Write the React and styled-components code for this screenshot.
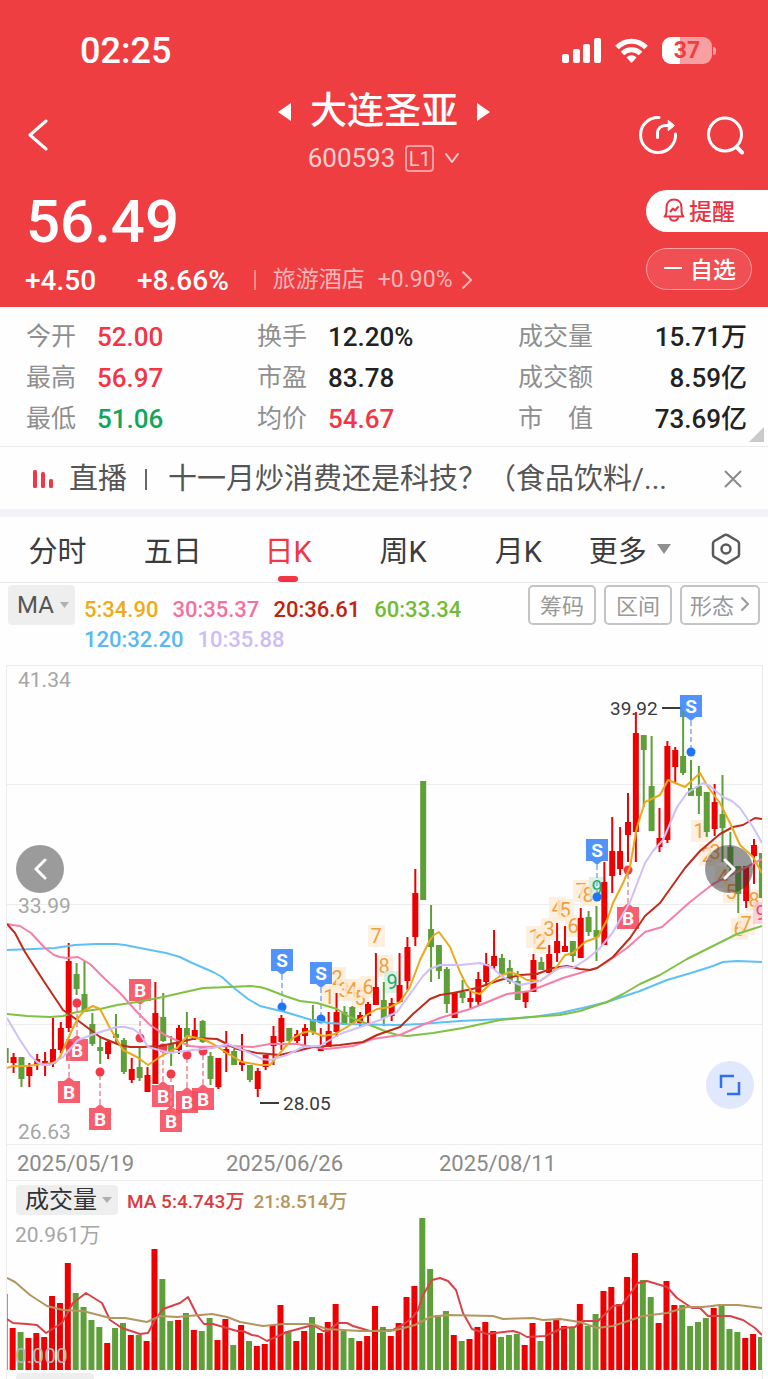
import React from "react";
import styled, { createGlobalStyle } from "styled-components";

const GlobalStyle = createGlobalStyle`
  * {
    box-sizing: border-box;
  }
  body {
    margin: 0;
    background: #fefefe;
    color: #333;
    font-family: Roboto, "Noto Sans CJK SC", sans-serif;
  }
  button, select {
    margin: 0;
    padding: 0;
    border: none;
    background: none;
    color: inherit;
    font: inherit;
    cursor: pointer;
  }
  a {
    color: inherit;
    text-decoration: none;
  }
  svg {
    display: block;
  }
`;

const Page = styled.div`
  min-width: 700px;
  overflow: hidden;
`;

/* ---------- header ---------- */

const Header = styled.header`
  background: #ef3e42;
  color: #fff;
  padding-bottom: 7px;
`;

const StatusBar = styled.div`
  display: flex;
  align-items: center;
  justify-content: space-between;
  height: 86px;
  padding: 15px 52px 0 80px;
`;

const Clock = styled.span`
  font-size: 36px;
  font-weight: 500;
  line-height: 40px;
`;

const StatusIcons = styled.div`
  display: flex;
  align-items: center;
  gap: 14px;
`;

const Battery = styled.div`
  position: relative;
  width: 50px;
  height: 27px;
  margin-right: 4px;
  border-radius: 9px;
  background: linear-gradient(90deg, #fff 37%, #f79fa1 37%);
  color: #ef3e42;
  font-size: 23px;
  font-weight: 700;
  line-height: 28px;
  text-align: center;

  &::after {
    content: "";
    position: absolute;
    right: -4px;
    top: 10px;
    width: 3px;
    height: 8px;
    border-radius: 0 3px 3px 0;
    background: #f79fa1;
  }
`;

const Nav = styled.nav`
  display: grid;
  grid-template-columns: 1fr auto 1fr;
  align-items: center;
  height: 98px;
  padding: 0 23px;
`;

const IconButton = styled.button`
  display: flex;
  align-items: center;
  justify-content: center;
`;

const NavBack = styled.div`
  padding-left: 5px;
`;

const NavIcons = styled.div`
  display: flex;
  justify-content: flex-end;
  gap: 26px;
`;

const StockTitle = styled.div`
  display: flex;
  flex-direction: column;
  align-items: center;
`;

const NameRow = styled.div`
  display: flex;
  align-items: center;
  gap: 19px;
  height: 46px;

  h1 {
    margin: 0;
    font-size: 37px;
    font-weight: 500;
    line-height: 46px;
  }
`;

const CodeRow = styled.button`
  display: flex;
  align-items: center;
  gap: 10px;
  height: 46px;
  color: #fbcfd0;
  font-size: 26px;
`;

const Level = styled.span`
  width: 29px;
  height: 27px;
  border: 2px solid #f79fa1;
  border-radius: 4px;
  font-size: 20px;
  line-height: 24px;
  text-align: center;
`;

const Quote = styled.div`
  display: flex;
  justify-content: space-between;
`;

const Price = styled.div`
  height: 76px;
  padding-left: 26px;
  font-size: 60px;
  font-weight: 500;
  line-height: 76px;
`;

const Changes = styled.div`
  display: flex;
  align-items: center;
  height: 40px;
  padding-left: 25px;
  font-size: 28px;
  font-weight: 500;
`;

const Percent = styled.span`
  margin-left: 41px;
`;

const Sector = styled.a`
  display: flex;
  align-items: center;
  gap: 13px;
  margin-left: 25px;
  padding-left: 19px;
  color: #f9b5b7;
  font-size: 23px;
  font-weight: 400;
  line-height: 28px;
  background: linear-gradient(#f58a8c, #f58a8c) left center / 2px 20px no-repeat;

  svg {
    margin-left: -5px;
  }
`;

const Pills = styled.div`
  display: flex;
  flex-direction: column;
  gap: 16px;
  padding-top: 6px;
`;

const Pill = styled.button`
  display: flex;
  align-items: center;
  gap: ${(p) => (p.$solid ? 4 : 8)}px;
  width: ${(p) => (p.$solid ? 122 : 106)}px;
  height: 42px;
  padding: 0 0 3px 17px;
  border: ${(p) => (p.$solid ? "none" : "1px solid #f79fa1")};
  border-radius: ${(p) => (p.$solid ? "21px 0 0 21px" : "21px")};
  background: ${(p) => (p.$solid ? "#fff" : "#f04f53")};
  color: ${(p) => (p.$solid ? "#e83343" : "#fff")};
  font-size: 23px;
  font-weight: 500;
`;

/* ---------- key figures ---------- */

const Stats = styled.dl`
  position: relative;
  display: grid;
  grid-template-columns: 231fr 261fr 229fr;
  grid-auto-rows: 41px;
  margin: 0;
  padding: 9px 21px 7px 26px;
  border-bottom: 1px solid #ebebeb;

  &::after {
    content: "";
    position: absolute;
    right: 4px;
    bottom: 4px;
    border-left: 15px solid transparent;
    border-bottom: 15px solid #c9c9c9;
  }
`;

const Stat = styled.div`
  display: flex;
  align-items: center;
  justify-content: ${(p) => (p.$spread ? "space-between" : "flex-start")};
  gap: 21px;
  line-height: 36px;

  dt {
    color: #8f8f8f;
    font-size: 25px;
  }
  dd {
    margin: 0;
    color: ${(p) => p.$color};
    font-size: 26px;
    font-weight: 500;
  }
`;

/* ---------- live news ---------- */

const News = styled.div`
  display: flex;
  align-items: center;
  height: 62px;
  padding: 2px 25px 0 32px;
  color: #555;
  font-size: 29px;
`;

const NewsLink = styled.a`
  display: flex;
  flex: 1;
  align-items: center;
  min-width: 0;
  line-height: 40px;
  white-space: nowrap;

  svg {
    flex: none;
    margin-right: 15px;
  }
`;

const Bar = styled.span`
  width: 2px;
  height: 21px;
  margin: 0 21px 0 18px;
  background: #666;
`;

const Band = styled.div`
  height: 8px;
  background: #f2f3f8;
`;

/* ---------- period tabs ---------- */

const Tabs = styled.div`
  display: grid;
  grid-template-columns: repeat(5, 15fr) 14fr 11fr;
  height: 66px;
  border-bottom: 1px solid #e6e6e6;
`;

const Tab = styled.button`
  position: relative;
  display: flex;
  align-items: center;
  justify-content: center;
  gap: 10px;
  padding-bottom: 2px;
  color: ${(p) => (p.$active ? "#f23645" : "#3c3c3c")};
  font-size: 29px;

  &::after {
    content: "";
    display: ${(p) => (p.$active ? "block" : "none")};
    position: absolute;
    bottom: 0;
    width: 20px;
    height: 6px;
    border-radius: 3px;
    background: #f23645;
  }
`;

/* ---------- legend above the chart ---------- */

const Legend = styled.div`
  display: flex;
  align-items: flex-start;
  height: 82px;
  padding: 2px 8px 0;
`;

const Picker = styled.label`
  position: relative;
  flex: none;
  width: ${(p) => p.$w}px;
  height: ${(p) => p.$h}px;
  border-radius: 4px;
  background: #eee;

  select {
    width: 100%;
    height: 100%;
    padding-left: 9px;
    appearance: none;
    color: ${(p) => p.$color};
    font-size: 24px;
    font-weight: 400;
    line-height: ${(p) => p.$h}px;
  }
  svg {
    position: absolute;
    right: 6px;
    top: 50%;
    margin-top: -3px;
    pointer-events: none;
  }
`;

const MaValues = styled.div`
  display: flex;
  flex: 1;
  flex-wrap: wrap;
  column-gap: 14px;
  padding: 10px 0 0 9px;
  font-size: 22px;
  font-weight: 500;
  line-height: 30px;
`;

const Colored = styled.span`
  color: ${(p) => p.$color};
`;

const Tools = styled.div`
  display: flex;
  gap: 8px;
`;

const Tool = styled.button`
  display: flex;
  align-items: center;
  gap: 6px;
  height: 40px;
  padding: 0 ${(p) => (p.$arrow ? 8 : 10)}px 3px;
  border: 2px solid #c4c4c4;
  border-radius: 5px;
  color: #999;
  font-size: 22px;
`;

/* ---------- charts ---------- */

const Frame = styled.div`
  margin: 0 5px 0 6px;
  border: 1px solid #ececec;
  border-bottom: none;
`;

const PriceBox = styled.div`
  position: relative;
`;

const ChartSvg = styled.svg`
  width: 100%;
  height: auto;
  overflow: hidden;
`;

const RoundButton = styled.button`
  position: absolute;
  display: flex;
  align-items: center;
  justify-content: center;
  width: 48px;
  height: 48px;
  border-radius: 50%;
  background: ${(p) => p.$bg};
`;

const PrevButton = styled(RoundButton)`
  left: 9px;
  top: 179px;
`;

const NextButton = styled(RoundButton)`
  right: 9px;
  top: 179px;
`;

const ExpandButton = styled(RoundButton)`
  right: 8px;
  bottom: 35px;
`;

const Dates = styled.div`
  display: grid;
  grid-template-columns: 209fr 213fr 323fr;
  height: 37px;
  padding-left: 10px;
  border: solid #ececec;
  border-width: 1px 0;
  color: #8a8a8a;
  font-size: 22px;
  line-height: 38px;
`;

const VolumeHead = styled.div`
  display: flex;
  align-items: center;
  gap: 9px;
  height: 34px;
  padding: 3px 9px 0;
  font-size: 19px;
  font-weight: 500;
`;

const NextPane = styled.div`
  height: 8px;
  padding: 2px 9px 0;

  &::before {
    content: "";
    display: block;
    width: 78px;
    height: 6px;
    border-radius: 4px 4px 0 0;
    background: #eee;
  }
`;

const RED = "#ee0000";
const GREEN = "#5f9f3a";

const stats = [
  ["今开", "52.00", "#f23645"],
  ["换手", "12.20%", "#222"],
  ["成交量", "15.71万", "#222"],
  ["最高", "56.97", "#f23645"],
  ["市盈", "83.78", "#222"],
  ["成交额", "8.59亿", "#222"],
  ["最低", "51.06", "#11a65a"],
  ["均价", "54.67", "#f23645"],
  ["市　值", "73.69亿", "#222"],
];

const maLegend = [
  ["5:34.90", "#eeab17"],
  ["30:35.37", "#f66f9d"],
  ["20:36.61", "#c0240f"],
  ["60:33.34", "#72bc31"],
  ["120:32.20", "#57b9f3"],
  ["10:35.88", "#cdbcf8"],
];

// up/down, high, body top, body bottom, low, volume
const candles = [
  ["g", 1048, 1048, 1063, 1063, 76],
  ["r", 1053, 1057, 1063, 1073, 42],
  ["g", 1057, 1057, 1079, 1087, 38],
  ["r", 1063, 1067, 1076, 1087, 32],
  ["r", 1054, 1059, 1065, 1070, 37],
  ["r", 1052, 1061, 1065, 1076, 33],
  ["r", 1018, 1049, 1063, 1067, 74],
  ["r", 1022, 1028, 1050, 1053, 67],
  ["r", 943, 961, 1028, 1032, 107],
  ["g", 963, 974, 989, 995, 77],
  ["g", 961, 994, 1012, 1012, 63],
  ["g", 1013, 1024, 1044, 1046, 50],
  ["g", 1037, 1047, 1051, 1064, 43],
  ["r", 1041, 1042, 1054, 1059, 27],
  ["g", 1014, 1034, 1038, 1043, 42],
  ["g", 1038, 1040, 1072, 1074, 47],
  ["r", 1058, 1069, 1080, 1083, 35],
  ["g", 1046, 1067, 1078, 1081, 35],
  ["r", 1067, 1075, 1092, 1092, 29],
  ["r", 982, 1013, 1084, 1084, 121],
  ["g", 993, 1017, 1041, 1042, 91],
  ["g", 1036, 1044, 1053, 1066, 49],
  ["r", 1025, 1028, 1050, 1054, 50],
  ["g", 1012, 1028, 1037, 1047, 57],
  ["r", 1018, 1030, 1037, 1040, 40],
  ["g", 1020, 1021, 1042, 1043, 39],
  ["g", 1052, 1056, 1079, 1085, 52],
  ["r", 1058, 1058, 1087, 1089, 30],
  ["r", 1031, 1049, 1053, 1072, 51],
  ["g", 1049, 1051, 1065, 1065, 25],
  ["r", 1034, 1062, 1065, 1071, 45],
  ["g", 1065, 1065, 1080, 1082, 29],
  ["r", 1068, 1071, 1089, 1097, 24],
  ["r", 1055, 1055, 1067, 1070, 26],
  ["r", 1026, 1036, 1046, 1065, 45],
  ["r", 1015, 1018, 1042, 1050, 65],
  ["g", 1028, 1028, 1041, 1041, 39],
  ["r", 1030, 1034, 1041, 1043, 29],
  ["r", 1024, 1028, 1036, 1045, 39],
  ["g", 1005, 1019, 1032, 1035, 53],
  ["r", 1028, 1046, 1051, 1051, 37],
  ["r", 1012, 1031, 1047, 1047, 48],
  ["r", 993, 1012, 1032, 1037, 66],
  ["g", 1006, 1012, 1025, 1025, 39],
  ["g", 1006, 1007, 1023, 1023, 32],
  ["r", 1012, 1015, 1023, 1027, 29],
  ["r", 1002, 1004, 1016, 1024, 34],
  ["r", 953, 987, 1005, 1005, 64],
  ["g", 982, 1000, 1018, 1026, 43],
  ["r", 998, 1003, 1016, 1021, 34],
  ["r", 953, 985, 1002, 1002, 47],
  ["r", 937, 947, 981, 990, 73],
  ["r", 869, 893, 937, 946, 84],
  ["g", 781, 781, 900, 900, 152],
  ["g", 905, 929, 947, 982, 101],
  ["g", 945, 945, 971, 979, 55],
  ["g", 967, 969, 1004, 1013, 59],
  ["r", 992, 992, 1018, 1018, 35],
  ["g", 980, 992, 998, 1003, 29],
  ["r", 991, 998, 1002, 1008, 31],
  ["r", 972, 979, 1002, 1006, 43],
  ["r", 953, 964, 982, 986, 48],
  ["r", 930, 956, 966, 970, 39],
  ["g", 954, 958, 975, 975, 33],
  ["g", 960, 968, 982, 984, 35],
  ["g", 971, 981, 1000, 1000, 36],
  ["r", 992, 992, 1002, 1008, 25],
  ["r", 954, 960, 992, 992, 47],
  ["g", 957, 962, 970, 970, 29],
  ["r", 945, 954, 973, 973, 48],
  ["r", 923, 941, 953, 962, 51],
  ["r", 926, 946, 952, 952, 44],
  ["g", 941, 941, 956, 962, 42],
  ["r", 908, 918, 958, 958, 66],
  ["g", 911, 917, 932, 936, 44],
  ["g", 906, 930, 937, 961, 56],
  ["r", 862, 882, 945, 945, 79],
  ["r", 817, 851, 876, 893, 83],
  ["r", 827, 851, 869, 875, 66],
  ["r", 793, 822, 835, 862, 93],
  ["r", 712, 733, 832, 862, 117],
  ["g", 735, 735, 750, 807, 90],
  ["g", 736, 786, 831, 831, 73],
  ["r", 808, 838, 847, 852, 47],
  ["r", 741, 746, 840, 843, 89],
  ["r", 747, 750, 767, 783, 65],
  ["g", 711, 756, 773, 775, 65],
  ["g", 760, 788, 796, 796, 44],
  ["g", 766, 786, 796, 814, 48],
  ["g", 792, 792, 832, 837, 52],
  ["r", 784, 802, 829, 836, 62],
  ["g", 775, 814, 828, 862, 66],
  ["g", 832, 847, 867, 872, 41],
  ["g", 866, 866, 894, 913, 38],
  ["r", 866, 866, 901, 908, 32],
  ["r", 839, 845, 856, 884, 36],
  ["g", 853, 853, 898, 898, 33],
];

const STEP = 7.877;

const priceLines = [
  {
    color: "#5fc0f5",
    points:
      "7,950 33,949 55,948 75,945 95,944 116,944 125,945 140,948 166,953 180,957 190,962 213,972 222,977 234,988 248,999 260,1006 285,1012 315,1021 330,1023 345,1024 400,1025 420,1024 460,1021 503,1019 533,1017 560,1013 587,1007 607,1002 640,991 667,980 691,973 713,966 723,962 737,961 762,962",
  },
  {
    color: "#7fc243",
    points:
      "7,1014 27,1016 50,1017 63,1016 77,1012 100,1009 117,1005 137,1002 163,997 203,988 230,987 250,986 260,987 267,989 285,996 300,1001 317,1003 337,1009 350,1017 370,1025 387,1032 398,1035 407,1036 433,1033 463,1028 500,1020 530,1017 560,1015 580,1011 607,1002 623,994 640,984 660,975 687,959 713,946 737,934 762,926",
  },
  {
    color: "#f67fa9",
    points:
      "7,924 13,925 20,926 31,933 45,948 54,955 60,957 67,958 78,957 90,964 105,979 120,993 137,1012 150,1025 165,1035 180,1042 190,1046 200,1047 230,1046 253,1047 270,1044 297,1044 313,1047 327,1049 353,1046 373,1039 400,1035 420,1026 440,1018 470,1009 485,1003 507,994 530,991 563,978 597,968 607,962 627,948 645,932 662,927 690,902 713,884 737,872 762,859",
  },
  {
    color: "#bf2c1c",
    points:
      "7,924 15,933 25,952 43,980 63,1010 80,1022 100,1037 120,1045 130,1047 143,1047 160,1046 180,1042 197,1038 217,1039 237,1049 257,1053 280,1055 297,1051 313,1047 340,1045 363,1042 377,1035 400,1027 413,1014 421,1007 430,999 440,995 453,993 477,988 500,980 520,975 537,974 553,968 567,966 580,969 590,970 597,968 613,957 630,938 645,916 660,903 685,868 700,851 720,834 733,827 743,825 755,818 762,819",
  },
  {
    color: "#e9aa1a",
    points:
      "7,1068 13,1066 27,1066 43,1064 55,1063 60,1057 63,1050 72,1030 78,1018 85,1010 93,1006 100,1009 110,1028 123,1050 137,1057 148,1065 163,1055 177,1048 187,1036 203,1039 213,1044 227,1053 242,1062 260,1065 270,1065 280,1053 293,1038 302,1033 310,1031 323,1036 335,1034 347,1027 363,1017 377,1009 390,1007 400,1002 410,987 420,960 430,940 434,935 439,932 450,947 460,972 466,984 472,992 480,994 493,981 500,976 510,972 518,975 527,980 540,981 553,972 565,955 573,953 585,942 598,937 607,920 613,903 623,883 630,867 637,827 645,802 660,795 668,780 685,787 700,773 708,787 720,803 730,823 740,845 753,857 762,873",
  },
  {
    color: "#d0bff8",
    points:
      "7,1018 20,1040 30,1055 37,1062 43,1065 50,1065 63,1057 78,1040 97,1033 117,1027 125,1027 133,1029 140,1034 148,1047 170,1053 193,1050 213,1048 228,1044 250,1053 262,1059 270,1060 287,1055 303,1047 320,1046 340,1034 363,1026 380,1020 397,1012 413,990 423,976 430,969 440,965 460,965 480,963 490,966 503,977 520,985 540,981 553,972 560,968 567,967 573,968 587,959 600,948 613,932 630,902 645,863 653,851 663,840 677,807 687,793 703,783 710,786 723,797 732,801 740,808 753,827 762,843",
  },
];

const volumeLines = [
  {
    color: "#db4247",
    points:
      "7,1319 13,1323 27,1324 37,1325 46,1333 62,1323 73,1303 86,1293 102,1303 110,1320 122,1328 140,1334 148,1333 155,1320 163,1309 180,1303 188,1297 197,1315 204,1324 213,1324 237,1331 243,1331 252,1335 258,1336 267,1341 287,1332 313,1325 323,1331 328,1331 338,1323 347,1323 353,1326 370,1331 393,1330 404,1324 413,1317 418,1310 423,1295 432,1280 440,1278 448,1281 456,1290 463,1313 472,1329 487,1334 513,1331 520,1333 527,1337 545,1336 563,1328 575,1327 582,1321 598,1321 613,1306 622,1305 638,1283 647,1281 657,1284 667,1287 677,1298 692,1308 700,1308 708,1316 730,1316 743,1320 755,1328 762,1335",
  },
  {
    color: "#b3965d",
    points:
      "7,1278 15,1282 30,1295 47,1306 63,1310 83,1311 110,1318 125,1318 147,1322 160,1316 177,1317 212,1314 227,1317 240,1322 263,1326 283,1324 312,1324 327,1329 360,1331 390,1331 400,1329 415,1325 430,1317 447,1315 493,1316 503,1319 533,1318 543,1320 560,1319 580,1322 597,1328 613,1326 643,1316 667,1313 687,1307 703,1307 720,1305 738,1305 762,1308",
  },
];

// nine-turn counters: digit, x, y, tone
const counts = [
  [1, 329, 997], [2, 337, 978], [3, 344, 990], [4, 352, 990], [5, 360, 998],
  [6, 368, 987], [7, 376, 936], [8, 384, 966], [9, 392, 982, "green"],
  [1, 534, 937], [2, 541, 942], [3, 549, 929], [4, 557, 908], [5, 565, 910],
  [6, 573, 926], [7, 581, 891], [8, 588, 895], [9, 597, 888, "green"],
  [1, 699, 831], [2, 707, 855], [3, 715, 852], [4, 723, 877], [5, 731, 892],
  [6, 739, 929], [7, 746, 924], [8, 754, 900], [9, 761, 913, "red"],
];

const tones = {
  orange: ["#fdebd6", "#efa03c"],
  green: ["#cdeedd", "#22a869"],
  red: ["#fcc6d0", "#f0486a"],
};

// buy / sell marks: type, x, top of the tag, y of the dot
const marks = [
  ["B", 77, 1039, 1003],
  ["B", 69, 1081, 1045],
  ["B", 100, 1108, 1072],
  ["B", 140, 979, 1038],
  ["B", 163, 1085, 1048],
  ["B", 171, 1110, 1074],
  ["B", 203, 1088, 1051],
  ["B", 187, 1091, 1055],
  ["B", 628, 907, 870],
  ["S", 282, 949, 1007],
  ["S", 321, 962, 1019],
  ["S", 597, 839, 897],
  ["S", 691, 695, 752],
];

const Count = ({ n, x, y, tone = "orange" }) => (
  <g>
    <rect x={x - 8} y={y - 11} width="17" height="22" fill={tones[tone][0]} opacity="0.75" />
    <text x={x} y={y + 7} fontSize="20" textAnchor="middle" fill={tones[tone][1]}>
      {n}
    </text>
  </g>
);

const Mark = ({ type, x, top, dot }) => {
  const sell = type === "S";
  const above = dot > top;
  const edge = above ? top + 22 : top;
  const tip = above ? edge + 4 : edge - 4;
  return (
    <g>
      <line
        x1={x}
        x2={x}
        y1={tip}
        y2={dot}
        stroke={sell ? "#7fa9f3" : "#e88b9a"}
        strokeWidth="1.5"
        strokeDasharray="5 3"
      />
      <circle cx={x} cy={dot} r="4.5" fill={sell ? "#1f74f8" : "#f5384a"} />
      <g opacity="0.9">
        <path
          d={`M${x - 11} ${top}h22v22h-22z M${x - 5} ${edge}L${x} ${tip}L${x + 5} ${edge}z`}
          fill={sell ? "#3f87fb" : "#f84d5e"}
        />
      </g>
      <text x={x} y={top + 18} fontSize="19" fontWeight="700" textAnchor="middle" fill="#fff">
        {type}
      </text>
    </g>
  );
};

const Lines = ({ lines }) =>
  lines.map((l) => (
    <polyline
      key={l.color}
      points={l.points}
      fill="none"
      stroke={l.color}
      strokeWidth="2"
      strokeLinejoin="round"
    />
  ));

const PriceChart = () => (
  <ChartSvg viewBox="7 666 755 478" role="img" aria-label="日K">
    {[784.5, 904.5, 1024.5].map((y) => (
      <line key={y} x1="7" x2="762" y1={y} y2={y} stroke="#ececec" />
    ))}
    {counts.map(([n, x, y, tone]) => (
      <Count key={x} n={n} x={x} y={y} tone={tone} />
    ))}
    <g fill="#a6a6a6" fontSize="21">
      <text x="18" y="687">41.34</text>
      <text x="18" y="913">33.99</text>
      <text x="18" y="1139">26.63</text>
    </g>
    <g fill="#3a3a3a" fontSize="19">
      <text x="610" y="715">39.92</text>
      <text x="283" y="1110">28.05</text>
    </g>
    <path d="M662 708h20M260 1103h19" stroke="#3a3a3a" strokeWidth="2" />
    {marks.map(([type, x, top, dot]) => (
      <Mark key={x} type={type} x={x} top={top} dot={dot} />
    ))}
    {candles.map(([dir, high, top, bottom, low], i) => {
      const x = 5.7 + i * STEP;
      return (
        <g key={i} fill={dir === "r" ? RED : GREEN}>
          <rect x={x - 1} y={high} width="2" height={low - high} />
          <rect x={x - 3} y={top} width="6" height={bottom - top} />
        </g>
      );
    })}
    <Lines lines={priceLines} />
  </ChartSvg>
);

const VolumeChart = () => (
  <ChartSvg viewBox="7 1215 755 156" role="img" aria-label="成交量">
    <text x="15" y="1242" fontSize="21" fill="#a6a6a6">20.961万</text>
    {candles.map(([dir, , , , , volume], i) => (
      <rect
        key={i}
        x={1.8 + i * STEP}
        y={1370 - volume}
        width="6"
        height={volume}
        fill={dir === "r" ? RED : GREEN}
      />
    ))}
    <Lines lines={volumeLines} />
    <text x="15" y="1363" fontSize="21" fill="#b4b4b4">0.000</text>
  </ChartSvg>
);

const Chevron = ({ w, h, sw = 2, dir = "right" }) => {
  const d = {
    right: `M2 2L${w - 2} ${h / 2}L2 ${h - 2}`,
    left: `M${w - 2} 2L2 ${h / 2}L${w - 2} ${h - 2}`,
    down: `M2 2L${w / 2} ${h - 2}L${w - 2} 2`,
  }[dir];
  return (
    <svg width={w} height={h} fill="none" stroke="currentColor" strokeWidth={sw}>
      <path d={d} strokeLinecap="round" strokeLinejoin="round" />
    </svg>
  );
};

const Caret = ({ w = 10, h = 6, color = "#b0b0b0" }) => (
  <svg width={w} height={h} viewBox="0 0 10 6" preserveAspectRatio="none">
    <path d="M0 0h10L5 6z" fill={color} />
  </svg>
);

const SignalIcon = () => (
  <svg width="39" height="26" fill="#fff">
    <rect x="0" y="16" width="7" height="9" rx="2" />
    <rect x="11" y="11" width="7" height="14" rx="2" />
    <rect x="21" y="6" width="7" height="19" rx="2" />
    <rect x="32" y="0" width="7" height="25" rx="2" />
  </svg>
);

const WifiIcon = () => (
  <svg width="33" height="26" fill="none" stroke="#fff" strokeWidth="5">
    <path d="M2 9.5C10 1 23 1 31 9.5" />
    <path d="M7.5 15.500C12.500 10.500 20.500 10.500 25.500 15.500" />
    <path d="M11.500 19.500C14.500 16.500 18.500 16.500 21.500 19.500L16.500 25z" fill="#fff" stroke="none" />
  </svg>
);

const ShareIcon = () => (
  <svg width="40" height="40" fill="none" stroke="#fff" strokeWidth="3" strokeLinecap="round">
    <path d="M20 2.500A17.500 17.500 0 1 0 36.500 19" />
    <path d="M18.500 22.500v-4c0-5 3.500-8 8-8h4" />
    <path d="M29.500 5.500l6 5-6 5z" fill="#fff" strokeWidth="1" strokeLinejoin="round" />
  </svg>
);

const SearchIcon = () => (
  <svg width="40" height="40" fill="none" stroke="#fff" strokeWidth="3" strokeLinecap="round">
    <circle cx="20" cy="19.500" r="16.500" />
    <path d="M32 32.500l5 5" strokeWidth="4" />
  </svg>
);

const BellIcon = () => (
  <svg width="22" height="24" fill="none" stroke="#e83343" strokeWidth="2" strokeLinejoin="round" strokeLinecap="round">
    <path d="M1.500 18.500c2-1.500 2-3 2-6V9.500c0-5 3-8 7.500-8s7.500 3 7.500 8v3c0 3 0 4.500 2 6z" />
    <path d="M7 20c1 3.500 7 3.500 8 0" />
    <path d="M7.500 13.500l2.500-3 2 2 3-3.500" />
  </svg>
);

const LiveIcon = () => (
  <svg width="22" height="20" fill="#f23645">
    <rect x="1" y="1" width="4" height="18" rx="1.500" />
    <rect x="9" y="3" width="4" height="16" rx="1.500" />
    <rect x="17" y="10" width="4" height="9" rx="1.500" />
  </svg>
);

const HexIcon = () => (
  <svg width="30" height="32" fill="none" stroke="#5a5a5a" strokeWidth="2.500" strokeLinejoin="round">
    <path d="M13.500 2.200q1.500-.8 3 0l10 5.800q1.500.9 1.500 2.600v10.800q0 1.700-1.500 2.600l-10 5.800q-1.500.8-3 0l-10-5.800Q2 23.100 2 21.400V10.600Q2 8.900 3.500 8z" />
    <circle cx="15" cy="16" r="4.500" />
  </svg>
);

const App = () => {
  return (
    <Page>
      <GlobalStyle />
      <Header>
        <StatusBar>
          <Clock>02:25</Clock>
          <StatusIcons>
            <SignalIcon />
            <WifiIcon />
            <Battery>37</Battery>
          </StatusIcons>
        </StatusBar>
        <Nav>
          <NavBack>
            <IconButton aria-label="返回">
              <Chevron w={20} h={32} sw={3} dir="left" />
            </IconButton>
          </NavBack>
          <StockTitle>
            <NameRow>
              <IconButton aria-label="上一只">
                <svg width="13" height="18"><path d="M13 0v18L0 9z" fill="#fff" /></svg>
              </IconButton>
              <h1>大连圣亚</h1>
              <IconButton aria-label="下一只">
                <svg width="13" height="18"><path d="M0 0v18l13-9z" fill="#fff" /></svg>
              </IconButton>
            </NameRow>
            <CodeRow>
              <span>600593</span>
              <Level>L1</Level>
              <Chevron w={16} h={12} dir="down" />
            </CodeRow>
          </StockTitle>
          <NavIcons>
            <IconButton aria-label="分享"><ShareIcon /></IconButton>
            <IconButton aria-label="搜索"><SearchIcon /></IconButton>
          </NavIcons>
        </Nav>
        <Quote>
          <div>
            <Price>56.49</Price>
            <Changes>
              <span>+4.50</span>
              <Percent>+8.66%</Percent>
              <Sector href="#sector">
                <span>旅游酒店</span>
                <span>+0.90%</span>
                <Chevron w={12} h={20} />
              </Sector>
            </Changes>
          </div>
          <Pills>
            <Pill $solid>
              <BellIcon />
              提醒
            </Pill>
            <Pill>
              <svg width="18" height="2"><path d="M0 1h18" stroke="#fff" strokeWidth="2" /></svg>
              自选
            </Pill>
          </Pills>
        </Quote>
      </Header>

      <Stats>
        {stats.map(([label, value, color], i) => (
          <Stat key={label} $color={color} $spread={i % 3 === 2}>
            <dt>{label}</dt>
            <dd>{value}</dd>
          </Stat>
        ))}
      </Stats>

      <News>
        <NewsLink href="#live">
          <LiveIcon />
          <span>直播</span>
          <Bar />
          <span>十一月炒消费还是科技？（食品饮料/...</span>
        </NewsLink>
        <IconButton aria-label="关闭">
          <svg width="20" height="20" stroke="#8a8a8a" strokeWidth="2">
            <path d="M2 2l16 16M18 2L2 18" />
          </svg>
        </IconButton>
      </News>
      <Band />

      <Tabs>
        {["分时", "五日", "日K", "周K", "月K"].map((t) => (
          <Tab key={t} $active={t === "日K"}>{t}</Tab>
        ))}
        <Tab>
          更多
          <Caret w={14} h={10} color="#8f8f8f" />
        </Tab>
        <Tab aria-label="设置"><HexIcon /></Tab>
      </Tabs>

      <Legend>
        <Picker $w={67} $h={40} $color="#555">
          <select aria-label="主图指标">
            <option>MA</option>
          </select>
          <Caret w={9} />
        </Picker>
        <MaValues>
          {maLegend.map(([text, color]) => (
            <Colored key={text} $color={color}>{text}</Colored>
          ))}
        </MaValues>
        <Tools>
          <Tool>筹码</Tool>
          <Tool>区间</Tool>
          <Tool $arrow>
            形态
            <Chevron w={10} h={16} />
          </Tool>
        </Tools>
      </Legend>

      <Frame>
        <PriceBox>
          <PriceChart />
          <PrevButton $bg="#9b9b9b" aria-label="向前">
            <Colored $color="#fff"><Chevron w={13} h={22} sw={3} dir="left" /></Colored>
          </PrevButton>
          <NextButton $bg="rgba(50, 50, 50, 0.5)" aria-label="向后">
            <Colored $color="#fff"><Chevron w={13} h={22} sw={3} /></Colored>
          </NextButton>
          <ExpandButton $bg="#dfe8fd" aria-label="全屏">
            <svg width="22" height="22" fill="none" stroke="#2f6ff0" strokeWidth="2.500">
              <path d="M2 14V2h13M20 8v12H8" />
            </svg>
          </ExpandButton>
        </PriceBox>
        <Dates>
          <span>2025/05/19</span>
          <span>2025/06/26</span>
          <span>2025/08/11</span>
        </Dates>
        <VolumeHead>
          <Picker $w={102} $h={30} $color="#333">
            <select aria-label="副图指标">
              <option>成交量</option>
            </select>
            <Caret />
          </Picker>
          <Colored $color="#db3a3f">MA 5:4.743万</Colored>
          <Colored $color="#b3965d">21:8.514万</Colored>
        </VolumeHead>
        <VolumeChart />
        <NextPane />
      </Frame>
    </Page>
  );
};

export default App;
